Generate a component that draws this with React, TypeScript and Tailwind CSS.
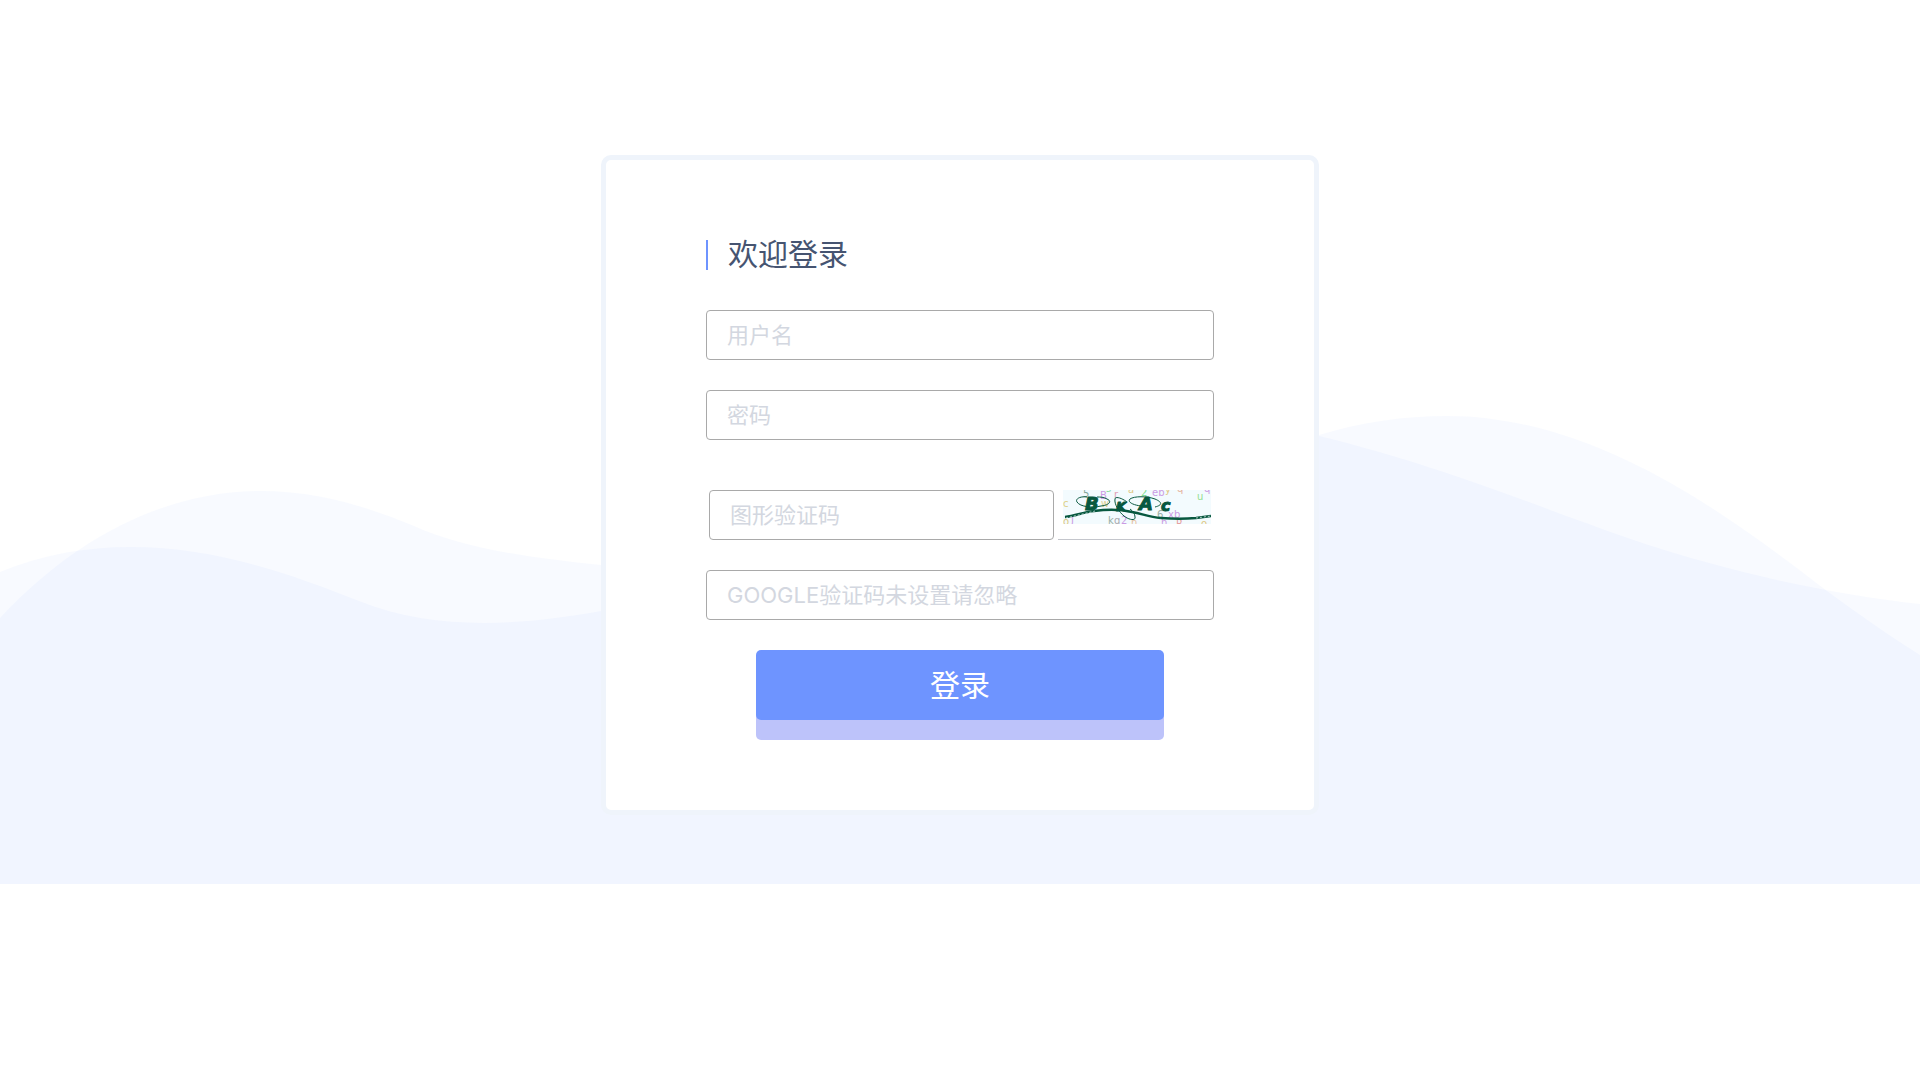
import type { InputHTMLAttributes } from 'react'

interface FieldProps extends InputHTMLAttributes<HTMLInputElement> {
  label: string
}

function Field({ label, ...props }: FieldProps) {
  return (
    <input
      {...props}
      aria-label={label}
      placeholder={label}
      className="block h-[50px] w-full rounded border border-[#a9a9a9] bg-white px-5 text-[22px] text-[#465471] outline-none placeholder:text-[#d3d7e0]"
    />
  )
}

function Waves() {
  return (
    <svg
      className="absolute inset-0 h-full w-full"
      viewBox="0 0 1920 884"
      preserveAspectRatio="none"
      fill="#709aff"
      fillOpacity="0.05"
      aria-hidden="true"
    >
      <path d="M0 618C80 532 172 491 261 491C318 491 368 507 414 526C462 548 530 558 601 565C860 600 1120 550 1319 435C1362 422 1404 416 1447 416C1605 416 1745 529 1827 591C1858 614 1890 636 1920 655V884H0Z" />
      <path d="M0 572C44 554 86 547 131 547C212 547 286 572 359 601C436 632 523 625 601 611C800 570 1100 390 1319 436C1480 475 1590 532 1713 564C1782 583 1850 596 1920 604V884H0Z" />
    </svg>
  )
}

const noise = [
  { c: 'c', x: 0, y: 17, fill: '#e0d08a' },
  { c: '5', x: 20, y: 7, fill: '#86a89b' },
  { c: 'B', x: 37, y: 9, fill: '#cb9be4' },
  { c: 's', x: 43, y: 2, fill: '#8bdc9f' },
  { c: 'r', x: 51, y: 8, fill: '#e09fb4' },
  { c: 'w', x: 38, y: 17, fill: '#e0d08a' },
  { c: 'a', x: 65, y: 3, fill: '#e0c885' },
  { c: '2', x: 78, y: 6, fill: '#82dc95' },
  { c: 'eb', x: 89, y: 6, fill: '#cb9be4' },
  { c: 'y', x: 102, y: 3, fill: '#e0c885' },
  { c: 'q', x: 114, y: 2, fill: '#e6b5a0' },
  { c: 'q', x: 141, y: 2, fill: '#cb9be4' },
  { c: 'u', x: 134, y: 10, fill: '#95e090' },
  { c: 'o', x: 0, y: 35, fill: '#e0c885' },
  { c: 'J', x: 8, y: 33, fill: '#cb9be4' },
  { c: 'k', x: 45, y: 34, fill: '#9ab0a5' },
  { c: 'q', x: 51, y: 34, fill: '#aaaab0' },
  { c: '2', x: 58, y: 34, fill: '#cb9be4' },
  { c: 'n', x: 68, y: 36, fill: '#e6c19f' },
  { c: '6', x: 94, y: 28, fill: '#9ab0a5' },
  { c: 'xb', x: 105, y: 28, fill: '#cb9be4' },
  { c: 'h', x: 98, y: 36, fill: '#cb9be4' },
  { c: 'R', x: 113, y: 37, fill: '#e6a0a0' },
  { c: 'o', x: 138, y: 37, fill: '#e0c885' },
]

function Captcha() {
  return (
    <svg width="148" height="34" viewBox="0 0 148 34" role="img" aria-label="图形验证码">
      <rect width="148" height="34" fill="#f3fbfe" />
      <g className="font-['DejaVu_Sans']" fontSize="10">
        {noise.map((n, i) => (
          <text key={i} x={n.x} y={n.y} fill={n.fill}>
            {n.c}
          </text>
        ))}
      </g>
      <g fill="none" stroke="#07583f">
        <path d="M24 7C17 6 12 9 14 12C17 17 30 18 38 16C47 15 49 11 44 9C41 7 37 7 34 7" />
        <path d="M64 12C59 8 52 6 52 9C51 14 56 22 61 26C66 30 73 31 72 27C72 24 70 21 67 19" />
        <path d="M78 16C70 15 64 12 67 9C71 6 84 6 92 9C99 12 100 15 92 17" />
        <path d="M2 27C12 26 21 22 31 21C45 19 57 19 69 22C80 24 86 27 98 28" strokeWidth="2.5" />
        <path d="M98 28C111 29 122 29 133 28L148 26" strokeWidth="2.5" />
        <path d="M3 28L32 21M133 28L148 26" stroke="#f3fbfe" strokeWidth="0.7" strokeDasharray="2 2" />
      </g>
      <g
        className="font-['DejaVu_Sans'] font-bold italic"
        fill="#07583f"
        stroke="#07583f"
        strokeLinejoin="round"
      >
        <text x="22" y="20" fontSize="18">B</text>
        <text x="53" y="21" fontSize="13">K</text>
        <text x="76" y="20" fontSize="18">A</text>
        <text x="98" y="21" fontSize="16">c</text>
      </g>
    </svg>
  )
}

export default function App() {
  return (
    <div className="min-h-screen bg-white font-['Inter','Noto_Sans_CJK_SC',sans-serif]">
      <main className="relative px-6 pt-[155px] pb-[69px]">
        <Waves />
        <form
          className="relative mx-auto w-full max-w-[718px] rounded-[10px] border-5 border-[#eff4fb] bg-white px-[100px] pt-20 pb-[70px]"
          onSubmit={(e) => e.preventDefault()}
        >
          <h1 className="mb-10 border-l-2 border-[#6e94ff] pb-0.5 pl-5 text-[30px] leading-7 text-[#465471]">
            欢迎登录
          </h1>
          <Field label="用户名" type="text" name="username" />
          <div className="mt-[30px]">
            <Field label="密码" type="password" name="password" />
          </div>
          <div className="mt-[50px] mb-[30px] flex gap-1 px-[3px]">
            <div className="w-[345px]">
              <Field label="图形验证码" type="text" name="captcha" />
            </div>
            <button type="button" className="flex-1 border-b border-[#c4c6cc] pl-[5px]">
              <span className="flex h-full items-start">
                <Captcha />
              </span>
            </button>
          </div>
          <Field label="GOOGLE验证码未设置请忽略" type="text" name="google" />
          <div className="mt-[30px] px-[50px] pb-5">
            <button
              type="submit"
              className="block h-[70px] w-full rounded-[5px] bg-[#6e94ff] text-[30px] text-white shadow-[0_20px_0_#bdc3fa]"
            >
              登录
            </button>
          </div>
        </form>
      </main>
    </div>
  )
}
